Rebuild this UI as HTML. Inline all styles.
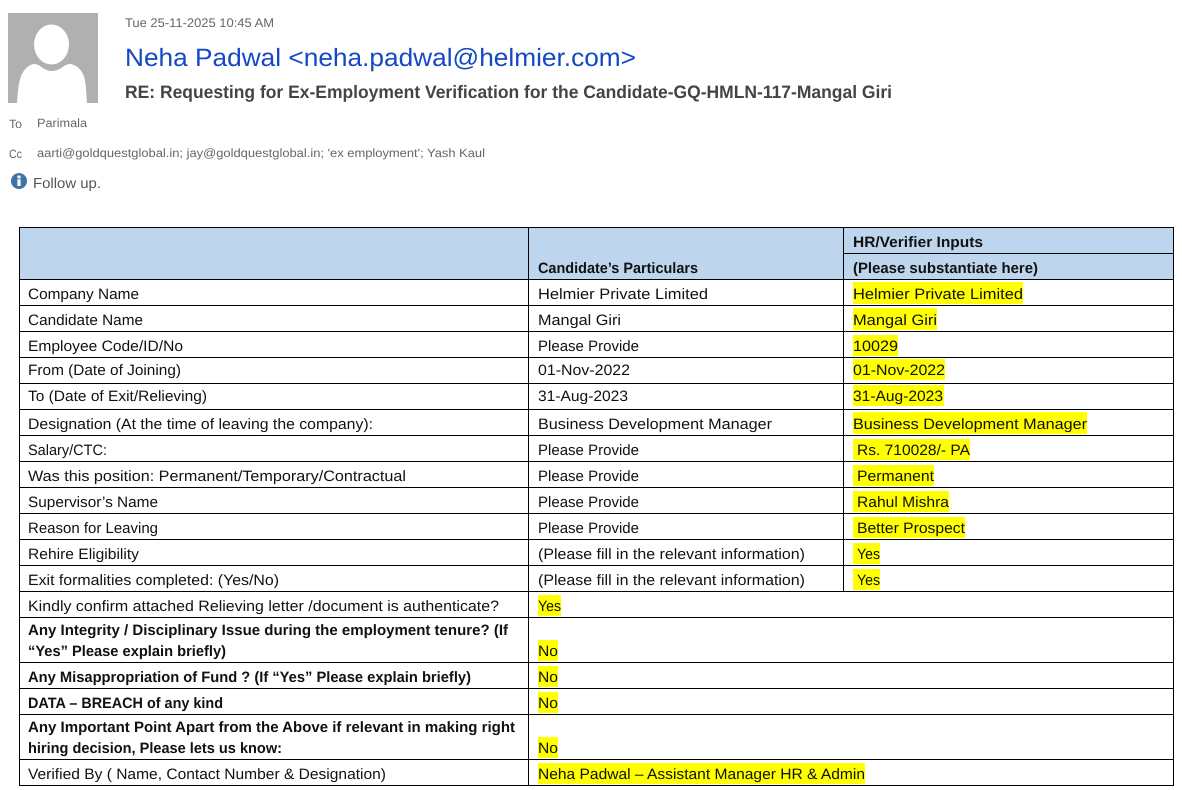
<!DOCTYPE html>
<html><head><meta charset="utf-8"><style>
html,body{margin:0;padding:0;background:#fff;width:1182px;height:790px;overflow:hidden}
svg{display:block}
text{font-family:"Liberation Sans",sans-serif;font-size:15px;fill:#111;text-rendering:geometricPrecision}
.b{font-weight:bold}
.h{fill:#ffff00}
.l{stroke:#000;stroke-width:1;shape-rendering:crispEdges}
</style></head><body>
<svg width="1182" height="790" viewBox="0 0 1182 790" xmlns="http://www.w3.org/2000/svg">
<rect x="8" y="13" width="90" height="90" fill="#b0b0b0"/>
<path d="M17 103C18 88 19 80 22 74C25 68 30 64 35 64C41 65 44 71 52 71C60 71 63 65 69 64C75 64 80 68 83 74C86 80 86 90 87 103Z" fill="#fff"/>
<ellipse cx="51.5" cy="44.5" rx="17.5" ry="20" fill="#fff"/>
<text x="125" y="27" textLength="149" lengthAdjust="spacingAndGlyphs" style="font-size:12.5px;fill:#666">Tue 25-11-2025 10:45 AM</text>
<text x="125" y="66" textLength="511" lengthAdjust="spacingAndGlyphs" style="font-size:25px;fill:#1548c4">Neha Padwal &lt;neha.padwal@helmier.com&gt;</text>
<text x="125" y="98" textLength="767" lengthAdjust="spacingAndGlyphs" class="b" style="font-size:18px;fill:#444">RE: Requesting for Ex-Employment Verification for the Candidate-GQ-HMLN-117-Mangal Giri</text>
<text x="9" y="128" textLength="13" lengthAdjust="spacingAndGlyphs" style="font-size:12px;fill:#666">To</text>
<text x="37" y="127" textLength="50" lengthAdjust="spacingAndGlyphs" style="font-size:12px;fill:#666">Parimala</text>
<text x="9" y="158" textLength="13" lengthAdjust="spacingAndGlyphs" style="font-size:12px;fill:#666">Cc</text>
<text x="37" y="157" textLength="448" lengthAdjust="spacingAndGlyphs" style="font-size:12px;fill:#666">aarti@goldquestglobal.in; jay@goldquestglobal.in; 'ex employment'; Yash Kaul</text>
<circle cx="19" cy="181" r="8" fill="#3f72a8"/>
<rect x="17.4" y="179.3" width="3.2" height="6.7" fill="#fff"/><rect x="17.4" y="175.6" width="3.2" height="2.7" fill="#fff"/>
<text x="33" y="188" textLength="68" lengthAdjust="spacingAndGlyphs" style="font-size:14.5px;fill:#555">Follow up.</text>

<rect x="19" y="227" width="1155" height="52" fill="#bdd6ee"/>
<g class="h">
<rect x="853" y="282" width="170" height="22"/>
<rect x="853" y="308" width="84" height="22"/>
<rect x="853" y="335" width="45" height="21"/>
<rect x="853" y="359" width="92" height="21"/>
<rect x="853" y="385" width="91" height="21"/>
<rect x="853" y="412" width="234" height="22"/>
<rect x="853" y="439" width="117" height="21"/>
<rect x="853" y="465" width="81" height="21"/>
<rect x="853" y="491" width="96" height="21"/>
<rect x="853" y="517" width="112" height="21"/>
<rect x="853" y="543" width="27" height="21"/>
<rect x="853" y="569" width="27" height="21"/>
<rect x="538" y="595" width="23" height="21"/>
<rect x="538" y="640" width="20" height="21"/>
<rect x="538" y="666" width="20" height="21"/>
<rect x="538" y="692" width="20" height="21"/>
<rect x="538" y="737" width="20" height="21"/>
<rect x="538" y="763" width="327" height="21"/>
</g>
<g class="l">
<line x1="19" y1="227.5" x2="1174" y2="227.5"/>
<line x1="843" y1="253.5" x2="1174" y2="253.5"/>
<line x1="19" y1="279.5" x2="1174" y2="279.5"/>
<line x1="19" y1="305.5" x2="1174" y2="305.5"/>
<line x1="19" y1="331.5" x2="1174" y2="331.5"/>
<line x1="19" y1="357.5" x2="1174" y2="357.5"/>
<line x1="19" y1="383.5" x2="1174" y2="383.5"/>
<line x1="19" y1="409.5" x2="1174" y2="409.5"/>
<line x1="19" y1="435.5" x2="1174" y2="435.5"/>
<line x1="19" y1="461.5" x2="1174" y2="461.5"/>
<line x1="19" y1="487.5" x2="1174" y2="487.5"/>
<line x1="19" y1="513.5" x2="1174" y2="513.5"/>
<line x1="19" y1="539.5" x2="1174" y2="539.5"/>
<line x1="19" y1="565.5" x2="1174" y2="565.5"/>
<line x1="19" y1="591.5" x2="1174" y2="591.5"/>
<line x1="19" y1="617.5" x2="1174" y2="617.5"/>
<line x1="19" y1="662.5" x2="1174" y2="662.5"/>
<line x1="19" y1="688.5" x2="1174" y2="688.5"/>
<line x1="19" y1="714.5" x2="1174" y2="714.5"/>
<line x1="19" y1="759.5" x2="1174" y2="759.5"/>
<line x1="19" y1="785.5" x2="1174" y2="785.5"/>
<line x1="19.5" y1="227" x2="19.5" y2="786"/>
<line x1="1173.5" y1="227" x2="1173.5" y2="786"/>
<line x1="528.5" y1="227" x2="528.5" y2="786"/>
<line x1="843.5" y1="227" x2="843.5" y2="592"/>
</g>
<text class="b" x="538" y="273" textLength="160" lengthAdjust="spacingAndGlyphs">Candidate’s Particulars</text>
<text class="b" x="853" y="247" textLength="130" lengthAdjust="spacingAndGlyphs">HR/Verifier Inputs</text>
<text class="b" x="853" y="273" textLength="185" lengthAdjust="spacingAndGlyphs">(Please substantiate here)</text>

<text x="28" y="299" textLength="111" lengthAdjust="spacingAndGlyphs">Company Name</text>
<text x="28" y="325" textLength="115" lengthAdjust="spacingAndGlyphs">Candidate Name</text>
<text x="28" y="351" textLength="155" lengthAdjust="spacingAndGlyphs">Employee Code/ID/No</text>
<text x="28" y="375" textLength="153" lengthAdjust="spacingAndGlyphs">From (Date of Joining)</text>
<text x="28" y="401" textLength="179" lengthAdjust="spacingAndGlyphs">To (Date of Exit/Relieving)</text>
<text x="28" y="429" textLength="345" lengthAdjust="spacingAndGlyphs">Designation (At the time of leaving the company):</text>
<text x="28" y="455" textLength="79" lengthAdjust="spacingAndGlyphs">Salary/CTC:</text>
<text x="28" y="481" textLength="378" lengthAdjust="spacingAndGlyphs">Was this position: Permanent/Temporary/Contractual</text>
<text x="28" y="507" textLength="130" lengthAdjust="spacingAndGlyphs">Supervisor’s Name</text>
<text x="28" y="533" textLength="130" lengthAdjust="spacingAndGlyphs">Reason for Leaving</text>
<text x="28" y="559" textLength="111" lengthAdjust="spacingAndGlyphs">Rehire Eligibility</text>
<text x="28" y="585" textLength="251" lengthAdjust="spacingAndGlyphs">Exit formalities completed: (Yes/No)</text>
<text x="28" y="611" textLength="471" lengthAdjust="spacingAndGlyphs">Kindly confirm attached Relieving letter /document is authenticate?</text>
<text class="b" x="28" y="635" textLength="480" lengthAdjust="spacingAndGlyphs">Any Integrity / Disciplinary Issue during the employment tenure? (If</text>
<text class="b" x="28" y="656" textLength="198" lengthAdjust="spacingAndGlyphs">“Yes” Please explain briefly)</text>
<text class="b" x="28" y="682" textLength="443" lengthAdjust="spacingAndGlyphs">Any Misappropriation of Fund ? (If “Yes” Please explain briefly)</text>
<text class="b" x="28" y="708" textLength="195" lengthAdjust="spacingAndGlyphs">DATA – BREACH of any kind</text>
<text class="b" x="28" y="732" textLength="487" lengthAdjust="spacingAndGlyphs">Any Important Point Apart from the Above if relevant in making right</text>
<text class="b" x="28" y="753" textLength="254" lengthAdjust="spacingAndGlyphs">hiring decision, Please lets us know:</text>
<text x="28" y="779" textLength="358" lengthAdjust="spacingAndGlyphs">Verified By ( Name, Contact Number &amp; Designation)</text>

<text x="538" y="299" textLength="170" lengthAdjust="spacingAndGlyphs">Helmier Private Limited</text>
<text x="538" y="325" textLength="83" lengthAdjust="spacingAndGlyphs">Mangal Giri</text>
<text x="538" y="351" textLength="101" lengthAdjust="spacingAndGlyphs">Please Provide</text>
<text x="538" y="375" textLength="92" lengthAdjust="spacingAndGlyphs">01-Nov-2022</text>
<text x="538" y="401" textLength="90" lengthAdjust="spacingAndGlyphs">31-Aug-2023</text>
<text x="538" y="429" textLength="234" lengthAdjust="spacingAndGlyphs">Business Development Manager</text>
<text x="538" y="455" textLength="101" lengthAdjust="spacingAndGlyphs">Please Provide</text>
<text x="538" y="481" textLength="101" lengthAdjust="spacingAndGlyphs">Please Provide</text>
<text x="538" y="507" textLength="101" lengthAdjust="spacingAndGlyphs">Please Provide</text>
<text x="538" y="533" textLength="101" lengthAdjust="spacingAndGlyphs">Please Provide</text>
<text x="538" y="559" textLength="267" lengthAdjust="spacingAndGlyphs">(Please fill in the relevant information)</text>
<text x="538" y="585" textLength="267" lengthAdjust="spacingAndGlyphs">(Please fill in the relevant information)</text>
<text x="538" y="611" textLength="23" lengthAdjust="spacingAndGlyphs">Yes</text>
<text x="538" y="656" textLength="20" lengthAdjust="spacingAndGlyphs">No</text>
<text x="538" y="682" textLength="20" lengthAdjust="spacingAndGlyphs">No</text>
<text x="538" y="708" textLength="20" lengthAdjust="spacingAndGlyphs">No</text>
<text x="538" y="753" textLength="20" lengthAdjust="spacingAndGlyphs">No</text>
<text x="538" y="779" textLength="327" lengthAdjust="spacingAndGlyphs">Neha Padwal – Assistant Manager HR &amp; Admin</text>

<text x="853" y="299" textLength="170" lengthAdjust="spacingAndGlyphs">Helmier Private Limited</text>
<text x="853" y="325" textLength="84" lengthAdjust="spacingAndGlyphs">Mangal Giri</text>
<text x="853" y="351" textLength="45" lengthAdjust="spacingAndGlyphs">10029</text>
<text x="853" y="375" textLength="92" lengthAdjust="spacingAndGlyphs">01-Nov-2022</text>
<text x="853" y="401" textLength="90" lengthAdjust="spacingAndGlyphs">31-Aug-2023</text>
<text x="853" y="429" textLength="234" lengthAdjust="spacingAndGlyphs">Business Development Manager</text>
<text x="857" y="455" textLength="113" lengthAdjust="spacingAndGlyphs">Rs. 710028/- PA</text>
<text x="857" y="481" textLength="77" lengthAdjust="spacingAndGlyphs">Permanent</text>
<text x="857" y="507" textLength="92" lengthAdjust="spacingAndGlyphs">Rahul Mishra</text>
<text x="857" y="533" textLength="108" lengthAdjust="spacingAndGlyphs">Better Prospect</text>
<text x="857" y="559" textLength="23" lengthAdjust="spacingAndGlyphs">Yes</text>
<text x="857" y="585" textLength="23" lengthAdjust="spacingAndGlyphs">Yes</text>
</svg>
</body></html>
